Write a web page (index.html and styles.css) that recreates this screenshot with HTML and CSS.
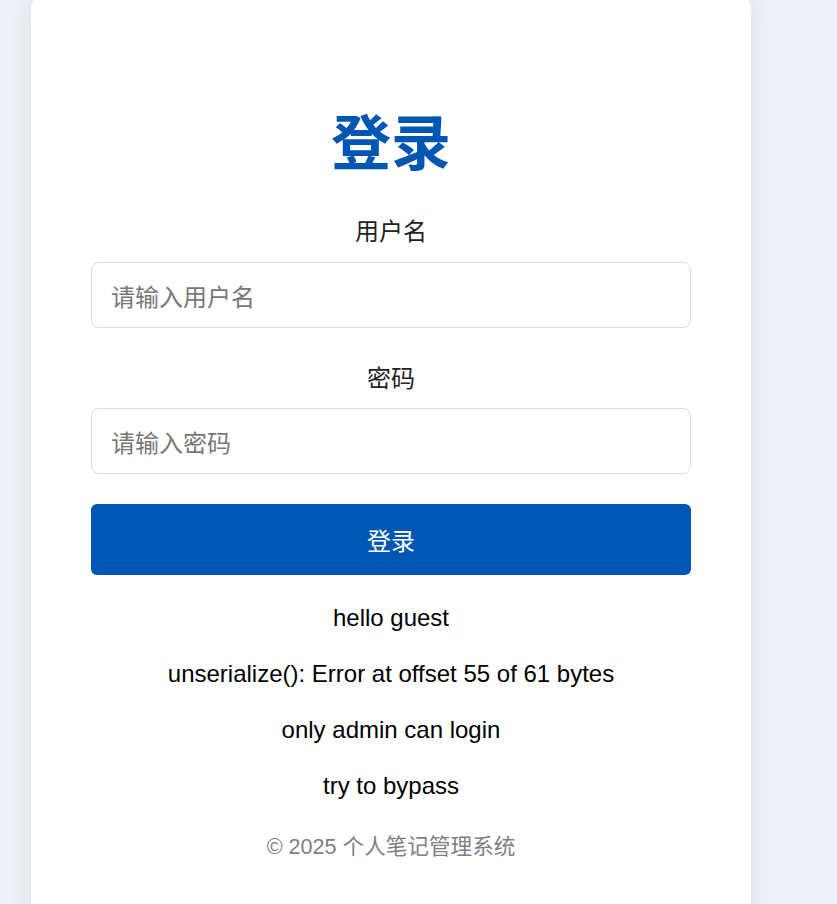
FILE: index.html
```html
<!DOCTYPE html>
<html lang="zh-CN">
<head>
<meta charset="utf-8">
<title>登录</title>
<link rel="stylesheet" href="styles.css">
</head>
<body>
<div class="card">
  <h1 class="title">登录</h1>
  <form class="form">
    <label class="label" for="u">用户名</label>
    <input class="input" id="u" type="text" placeholder="请输入用户名">
    <label class="label label-second" for="p">密码</label>
    <input class="input" id="p" type="password" placeholder="请输入密码">
    <button class="btn" type="button">登录</button>
  </form>
  <div class="messages">
    <p class="msg">hello guest</p>
    <p class="msg">unserialize(): Error at offset 55 of 61 bytes</p>
    <p class="msg">only admin can login</p>
    <p class="msg">try to bypass</p>
  </div>
  <p class="footer">© 2025 个人笔记管理系统</p>
</div>
</body>
</html>
```

FILE: styles.css
```css
html, body {
  margin: 0;
  padding: 0;
}
body {
  background: #eef2f7;
  font-family: "Liberation Sans", "Noto Sans CJK SC", sans-serif;
  font-size: 24px;
  color: #000;
  overflow: hidden;
}
.card {
  box-sizing: border-box;
  width: 720px;
  margin: -4px 0 0 31px;
  padding: 107px 60px 60px;
  background: #fff;
  border-radius: 12px;
  box-shadow: 0 0 24px rgba(40, 60, 90, 0.10);
  text-align: center;
  min-height: 1000px;
}
.title {
  margin: 0;
  font-size: 60px;
  line-height: 72px;
  font-weight: 700;
  color: #0057b3;
  font-family: "Noto Sans CJK SC", sans-serif;
}
.form {
  display: flex;
  flex-direction: column;
  margin-top: 39px;
}
.label {
  display: block;
  line-height: 32px;
  color: #222;
  font-family: "Noto Sans CJK SC", sans-serif;
  margin-bottom: 16px;
}
.label-second {
  margin-top: 33px;
  margin-bottom: 15px;
}
.input {
  box-sizing: border-box;
  width: 100%;
  height: 66px;
  padding: 0 19px;
  border: 1px solid #dcdcdc;
  border-radius: 8px;
  font-size: 24px;
  font-family: "Noto Sans CJK SC", sans-serif;
  color: #333;
  outline: none;
  background: #fff;
}
.input::placeholder {
  color: #777;
}
.btn {
  margin-top: 30px;
  height: 71px;
  border: 0;
  border-radius: 6px;
  background: #0057b3;
  color: #fff;
  font-size: 24px;
  font-family: "Noto Sans CJK SC", sans-serif;
}
.messages {
  margin-top: 27px;
}
.msg {
  margin: 0 0 24px;
  line-height: 32px;
}
.footer {
  margin: 29px 0 0;
  line-height: 32px;
  font-size: 21.6px;
  color: #808080;
}
```
